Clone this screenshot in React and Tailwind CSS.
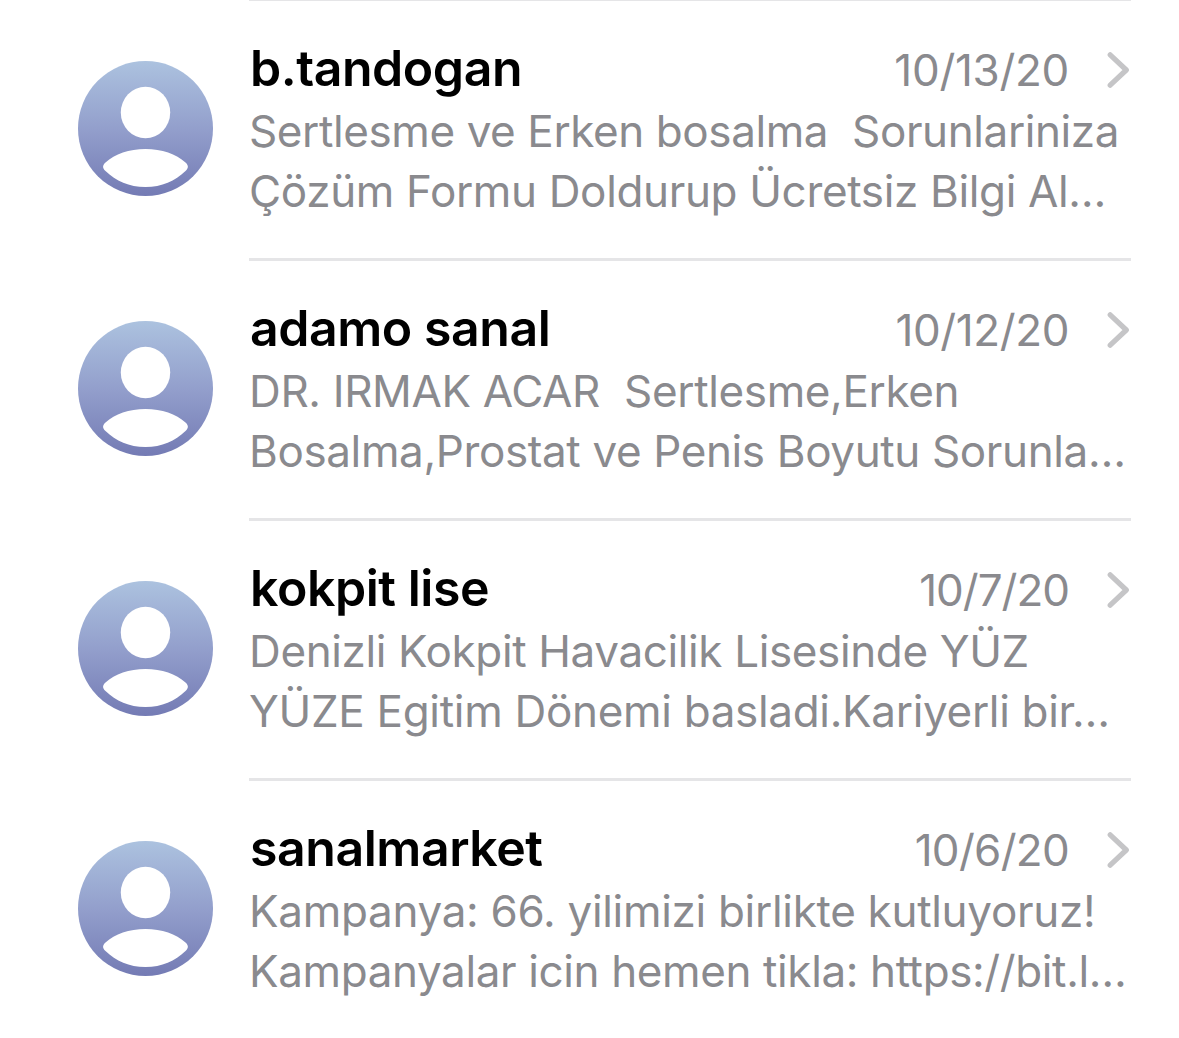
import React from 'react';

const messages = [
  {
    sender: 'b.tandogan',
    date: '10/13/20',
    dateTracking: 'tracking-[-0.3px]',
    lines: [
      { text: 'Sertlesme ve Erken bosalma  Sorunlariniza', tracking: 'tracking-[-0.4px]' },
      { text: 'Çözüm Formu Doldurup Ücretsiz Bilgi Al…', tracking: 'tracking-[-0.35px]' },
    ],
  },
  {
    sender: 'adamo sanal',
    date: '10/12/20',
    dateTracking: 'tracking-[-0.4px]',
    lines: [
      { text: 'DR. IRMAK ACAR  Sertlesme,Erken', tracking: 'tracking-[-0.36px]' },
      { text: 'Bosalma,Prostat ve Penis Boyutu Sorunla…', tracking: 'tracking-[-0.37px]' },
    ],
  },
  {
    sender: 'kokpit lise',
    date: '10/7/20',
    dateTracking: 'tracking-[-1px]',
    lines: [
      { text: 'Denizli Kokpit Havacilik Lisesinde YÜZ', tracking: 'tracking-[-0.37px]' },
      { text: 'YÜZE Egitim Dönemi basladi.Kariyerli bir…', tracking: 'tracking-[-0.31px]' },
    ],
  },
  {
    sender: 'sanalmarket',
    date: '10/6/20',
    dateTracking: 'tracking-[-0.7px]',
    lines: [
      { text: 'Kampanya: 66. yilimizi birlikte kutluyoruz!', tracking: 'tracking-[-0.3px]' },
      { text: 'Kampanyalar icin hemen tikla: https://bit.l…', tracking: 'tracking-[-0.38px]' },
    ],
  },
];

const Avatar = () => (
  <div className="w-[135px] h-[135px] mt-[60px] shrink-0 rounded-full bg-linear-to-b from-[#acc2df] via-[#939fcc] to-[#747bb4]">
    <svg viewBox="0 0 135 135" className="w-full h-full" fill="white">
      <ellipse cx="67.5" cy="51.5" rx="24.7" ry="25.7" />
      <path d="M67.5 88C84 88 98 93 107.5 101.5C110.7 104.5 110.7 107 107.5 110C97 120 84 126 67.5 126C51 126 38 120 27.5 110C24.3 107 24.3 104.5 27.5 101.5C37 93 51 88 67.5 88Z" />
    </svg>
  </div>
);

const Chevron = () => (
  <svg viewBox="0 0 24 36" className="w-6 h-9 ml-[38px] shrink-0" fill="none">
    <path d="M3.2 2.8L19.3 18L3.2 33.2" stroke="#c5c5c7" strokeWidth="5.2" strokeLinecap="round" strokeLinejoin="round" />
  </svg>
);

const MessageRow = ({ message }) => (
  <div className="flex h-[260px] pl-[78px] pr-12">
    <Avatar />
    <div className="flex-1 min-w-0 ml-9 pt-[37px] border-b-3 border-[#e5e5e7]">
      <div className="flex items-center h-[63px]">
        <h3 className="flex-1 pl-px text-[50px] leading-[60px] h-[63px] font-semibold text-black tracking-[-0.45px]">
          {message.sender}
        </h3>
        <span className={`text-[44px] leading-[60px] h-[59px] text-[#8a8a8e] ${message.dateTracking}`}>
          {message.date}
        </span>
        <Chevron />
      </div>
      {message.lines.map((line) => (
        <p key={line.text} className={`text-[44px] leading-[60px] whitespace-pre text-[#8a8a8e] ${line.tracking}`}>
          {line.text}
        </p>
      ))}
    </div>
  </div>
);

const App = () => {
  return (
    <div className="w-[1179px] h-[1038px] overflow-hidden bg-white font-['Inter',sans-serif]">
      <div className="h-px ml-[249px] mr-12 bg-[#e5e5e7]" />
      {messages.map((message) => (
        <MessageRow key={message.sender} message={message} />
      ))}
    </div>
  );
};

export default App;
